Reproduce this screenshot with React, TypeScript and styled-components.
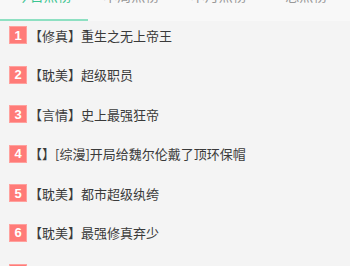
import React from "react";
import styled, { createGlobalStyle } from "styled-components";

const Global = createGlobalStyle`
  html, body { margin: 0; padding: 0; background: #f4f4f4; overflow: hidden; }
  body { font-family: "Noto Sans CJK SC", "Noto Sans", sans-serif; }
`;

const Page = styled.div`
  width: 350px;
  height: 266px;
  overflow: hidden;
  background: #f4f4f4;
`;

const TabBar = styled.div`
  display: grid;
  grid-template-columns: repeat(4, 1fr);
  height: 44px;
  margin-top: -23px;
  background: #f8f8f8;
`;

const Tab = styled.div<{ $active?: boolean }>`
  display: flex;
  align-items: center;
  justify-content: center;
  padding-bottom: 6px;
  font-size: 14px;
  line-height: 14px;
  color: ${(p) => (p.$active ? "#3cc591" : "#999999")};
  border-bottom: 2px solid ${(p) => (p.$active ? "#8ee0c2" : "transparent")};
`;

const List = styled.div`
  display: grid;
  grid-auto-rows: 18px;
  row-gap: 21.6px;
  padding: 5px 0 0 9px;
`;

const Row = styled.div`
  display: flex;
  align-items: center;
  gap: 2px;
`;

const Badge = styled.span`
  flex: none;
  width: 18px;
  height: 18px;
  box-sizing: border-box;
  display: flex;
  align-items: center;
  justify-content: center;
  background: #ff7b78;
  border: 1px solid #ffa19e;
  color: #fff;
  font-family: "Liberation Sans", Arial, sans-serif;
  font-size: 13px;
  font-weight: bold;
`;

const Title = styled.span`
  font-size: 13px;
  color: #3a3a3a;
  white-space: nowrap;
`;

const tabs = ["今日热榜", "本周热榜", "本月热榜", "总热榜"];
const items = [
  "【修真】重生之无上帝王",
  "【耽美】超级职员",
  "【言情】史上最强狂帝",
  "【】[综漫]开局给魏尔伦戴了顶环保帽",
  "【耽美】都市超级纨绔",
  "【耽美】最强修真弃少",
  "【耽美】超级兵王",
];

export default function App() {
  return (
    <Page>
      <Global />
      <TabBar>
        {tabs.map((t, i) => (
          <Tab key={t} $active={i === 0}>
            {t}
          </Tab>
        ))}
      </TabBar>
      <List>
        {items.map((t, i) => (
          <Row key={i}>
            <Badge>{i + 1}</Badge>
            <Title>{t}</Title>
          </Row>
        ))}
      </List>
    </Page>
  );
}
